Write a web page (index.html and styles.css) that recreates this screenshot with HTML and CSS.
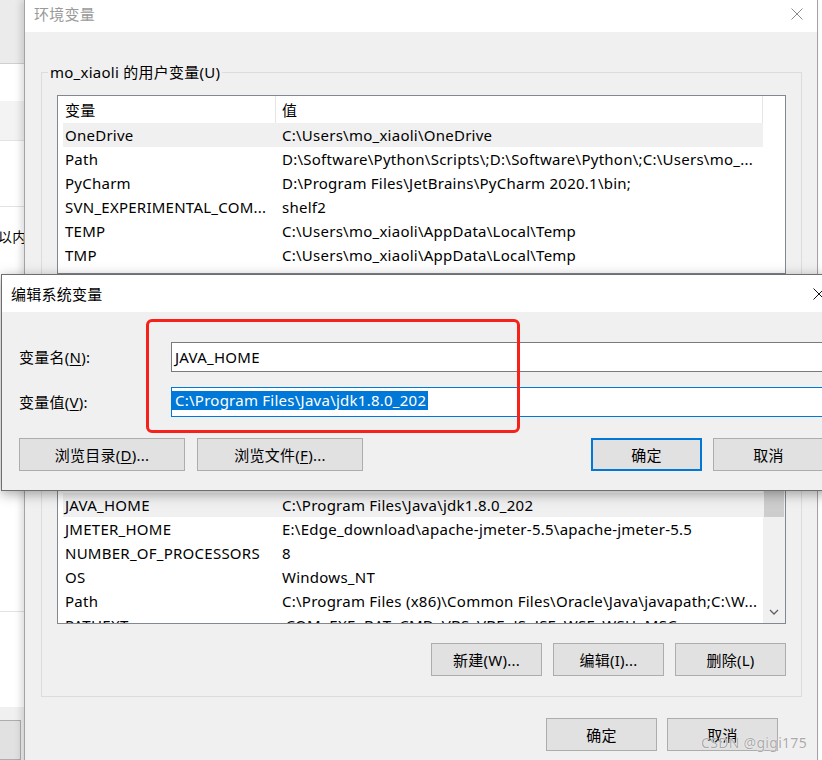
FILE: index.html
```html
<!DOCTYPE html>
<html lang="zh-CN">
<head>
<meta charset="utf-8">
<title>环境变量</title>
<link rel="stylesheet" href="styles.css">
</head>
<body>
<div class="bgwin">
  <div class="s1"></div>
  <div class="s2"></div>
  <div class="s3"></div>
  <div class="s4"></div>
  <div class="s5"><span class="cut">以内容</span></div>
  <div class="s6"></div>
  <div class="s7"><div class="bgbtn"></div></div>
</div>

<div class="main">
  <div class="titlebar">
    <span class="title">环境变量</span>
    <svg class="close" width="12" height="12" viewBox="0 0 12 12"><path d="M0.5 0.5L11.5 11.5M11.5 0.5L0.5 11.5" stroke="#8a8a8a" stroke-width="1" fill="none"/></svg>
  </div>
  <div class="winbody">
    <fieldset class="group">
      <legend>mo_xiaoli 的用户变量(U)</legend>
      <div class="list list-user">
        <div class="list-main">
          <div class="lhead"><div class="h1">变量</div><div class="h2">值</div></div>
          <div class="row sel"><div class="c1">OneDrive</div><div class="c2">C:\Users\mo_xiaoli\OneDrive</div></div>
          <div class="row"><div class="c1">Path</div><div class="c2">D:\Software\Python\Scripts\;D:\Software\Python\;C:\Users\mo_...</div></div>
          <div class="row"><div class="c1">PyCharm</div><div class="c2">D:\Program Files\JetBrains\PyCharm 2020.1\bin;</div></div>
          <div class="row"><div class="c1">SVN_EXPERIMENTAL_COM...</div><div class="c2">shelf2</div></div>
          <div class="row"><div class="c1">TEMP</div><div class="c2">C:\Users\mo_xiaoli\AppData\Local\Temp</div></div>
          <div class="row"><div class="c1">TMP</div><div class="c2">C:\Users\mo_xiaoli\AppData\Local\Temp</div></div>
        </div>
        <div class="list-side"></div>
      </div>
      <div class="btnrow">
        <button class="btn"><span>新建(N)...</span></button>
        <button class="btn"><span>编辑(E)...</span></button>
        <button class="btn"><span>删除(D)</span></button>
      </div>
    </fieldset>

    <fieldset class="group">
      <legend>系统变量(S)</legend>
      <div class="list list-sys">
        <div class="list-main">
          <div class="lhead"><div class="h1">变量</div><div class="h2">值</div></div>
          <div class="row"><div class="c1">ComSpec</div><div class="c2">C:\Windows\system32\cmd.exe</div></div>
          <div class="row"><div class="c1">DriverData</div><div class="c2">C:\Windows\System32\Drivers\DriverData</div></div>
          <div class="row"><div class="c1">FPS_BROWSER_APP_PROFILE...</div><div class="c2">Internet Explorer</div></div>
          <div class="row sel"><div class="c1">JAVA_HOME</div><div class="c2">C:\Program Files\Java\jdk1.8.0_202</div></div>
          <div class="row"><div class="c1">JMETER_HOME</div><div class="c2">E:\Edge_download\apache-jmeter-5.5\apache-jmeter-5.5</div></div>
          <div class="row"><div class="c1">NUMBER_OF_PROCESSORS</div><div class="c2">8</div></div>
          <div class="row"><div class="c1">OS</div><div class="c2">Windows_NT</div></div>
          <div class="row"><div class="c1">Path</div><div class="c2">C:\Program Files (x86)\Common Files\Oracle\Java\javapath;C:\W...</div></div>
          <div class="row"><div class="c1">PATHEXT</div><div class="c2">.COM;.EXE;.BAT;.CMD;.VBS;.VBE;.JS;.JSE;.WSF;.WSH;.MSC</div></div>
        </div>
        <div class="list-side scroll">
          <div class="thumb"></div>
          <div class="arrow">
            <svg width="10" height="6" viewBox="0 0 10 6"><polyline points="1,1 5,5 9,1" fill="none" stroke="#606060" stroke-width="1.3"/></svg>
          </div>
        </div>
      </div>
      <div class="btnrow">
        <button class="btn"><span>新建(W)...</span></button>
        <button class="btn"><span>编辑(I)...</span></button>
        <button class="btn"><span>删除(L)</span></button>
      </div>
    </fieldset>

    <div class="footer">
      <button class="btn"><span>确定</span></button>
      <button class="btn"><span>取消</span></button>
    </div>
  </div>
</div>

<div class="dialog">
  <div class="dtitle">
    <span>编辑系统变量</span>
    <svg class="dclose" width="12" height="12" viewBox="0 0 12 12"><path d="M0.5 0.5L11.5 11.5M11.5 0.5L0.5 11.5" stroke="#111" stroke-width="1" fill="none"/></svg>
  </div>
  <div class="dbody">
    <div class="field">
      <label>变量名(<u>N</u>):</label>
      <div class="inp">JAVA_HOME</div>
    </div>
    <div class="field field2">
      <label>变量值(<u>V</u>):</label>
      <div class="inp focus"><span class="selection">C:\Program Files\Java\jdk1.8.0_202</span></div>
    </div>
    <div class="dbtns">
      <button class="btn wide"><span>浏览目录(<u>D</u>)...</span></button>
      <button class="btn wide second"><span>浏览文件(<u>F</u>)...</span></button>
      <span class="spacer"></span>
      <button class="btn default"><span>确定</span></button>
      <button class="btn cancel"><span>取消</span></button>
    </div>
  </div>
  <div class="redbox"></div>
</div>

<div class="watermark">CSDN @gigi175</div>
</body>
</html>
```

FILE: styles.css
```css
* { box-sizing: border-box; }
html, body { margin: 0; padding: 0; }
body {
  width: 822px;
  height: 760px;
  overflow: hidden;
  position: relative;
  background: #fff;
  font-family: "Noto Sans", "Noto Sans CJK SC", sans-serif;
  font-size: 15px;
  line-height: 20px;
  letter-spacing: 0.25px;
  color: #000;
}

/* background window on the far left */
.bgwin {
  position: absolute;
  left: 0; top: 0;
  width: 24px; height: 760px;
  background: #fff;
  display: flex;
  flex-direction: column;
  overflow: hidden;
}
.bgwin .s1 { height: 64px; background: #ebebeb; border-bottom: 1px solid #cfcfcf; }
.bgwin .s2 { height: 37px; background: #fff; }
.bgwin .s3 { height: 40px; background: #f3f3f3; border-bottom: 1px solid #e3e3e3; }
.bgwin .s4 { height: 66px; border-bottom: 1px solid #e3e3e3; }
.bgwin .s5 { height: 406px; border-bottom: 1px solid #e3e3e3; padding-top: 21px; white-space: nowrap; overflow: hidden; }
.bgwin .s5 .cut { display: block; margin-left: -2px; font-size: 14px; line-height: 18px; }
.bgwin .s6 { height: 95px; }
.bgwin .s7 { flex: 1; background: #f0f0f0; padding-top: 13px; }
.bgwin .bgbtn { margin-left: -1px; width: 22px; height: 40px; background: #e1e1e1; border: 1px solid #adadad; }

/* main window */
.main {
  position: absolute;
  left: 24px; top: 0;
  width: 794px; height: 780px;
  border-left: 1px solid #a3a3a3;
  border-right: 1px solid #a3a3a3;
  background: #f0f0f0;
  box-shadow: -3px 0 7px rgba(0, 0, 0, 0.14);
  display: flex;
  flex-direction: column;
}
.titlebar {
  height: 32px;
  background: #fff;
  display: flex;
  align-items: center;
  padding: 0 14px 5px 9px;
  color: #9a9a9a;
}
.titlebar .close { margin-left: auto; }

.winbody { padding: 29px 15px 0 16px; }

.group {
  margin: 0;
  border: 1px solid #dcdcdc;
  padding: 0 15px 20px 6px;
  min-width: 0;
}
.group + .group { margin-top: 12px; }
.group legend { padding: 0 2px; line-height: 22px; }

.list {
  margin: 12px 0 0 9px;
  border: 1px solid #828790;
  background: #fff;
  display: flex;
  overflow: hidden;
}
.list-user { height: 179px; }
.list-sys { height: 231px; }
.list-main { width: 705px; flex: none; }
.list-side { flex: 1; }

.lhead { display: flex; height: 27px; }
.lhead .h1 {
  width: 218px;
  padding-left: 7px;
  border-right: 1px solid #e5e5e5;
  display: flex; align-items: center;
}
.lhead .h2 {
  flex: 1;
  padding-left: 6px;
  border-right: 1px solid #e5e5e5;
  display: flex; align-items: center;
}

.row { display: flex; height: 24px; align-items: center; margin-left: 5px; }
.row .c1 { width: 217px; padding-left: 2px; white-space: nowrap; overflow: hidden; flex: none; }
.row .c2 { flex: 1; padding-left: 2px; white-space: nowrap; overflow: hidden; }
.row.sel { background: #f0f0f0; }

.scroll { background: #f0f0f0; display: flex; flex-direction: column; }
.scroll .thumb { margin: 40px 1px 0 1px; height: 83px; background: #cdcdcd; }
.scroll .arrow { margin-top: auto; height: 22px; display: flex; align-items: center; justify-content: center; }

.btn {
  width: 111px;
  height: 33px;
  padding: 0;
  margin: 0;
  background: #e1e1e1;
  border: 1px solid #adadad;
  font: inherit;
  letter-spacing: inherit;
  color: #000;
  display: flex;
  align-items: center;
  justify-content: center;
  white-space: nowrap;
}
.btnrow { display: flex; justify-content: flex-end; gap: 11px; margin-top: 19px; }
.footer { display: flex; justify-content: flex-end; gap: 10px; margin-top: 21px; padding-right: 24px; }

/* edit dialog */
.dialog {
  position: absolute;
  left: 1px; top: 274px;
  width: 841px; height: 217px;
  border: 1px solid #6e6e6e;
  background: #f0f0f0;
  box-shadow: 0 3px 12px rgba(0, 0, 0, 0.35);
}
.dtitle {
  height: 37px;
  background: #fff;
  display: flex;
  align-items: center;
  padding: 0 16px 0 9px;
}
.dtitle .dclose { margin-left: auto; }
.dbody { padding: 30px 17px 0 17px; }
.field { display: grid; grid-template-columns: 152px 1fr; align-items: center; }
.field2 { margin-top: 15px; }
.field u, .dbtns u { text-decoration-thickness: 1px; text-underline-offset: 2px; }
.inp {
  height: 30px;
  background: #fff;
  border: 1px solid #7a7a7a;
  padding-left: 3px;
  display: flex;
  align-items: center;
  white-space: nowrap;
  overflow: hidden;
}
.inp.focus { border-color: #0078d7; padding-left: 0; }
.selection {
  background: #0078d7;
  color: #fff;
  padding: 0 2px 0 3px;
  line-height: 19px;
  margin-top: -4px;
}
.dbtns { display: flex; margin-top: 21px; }
.btn.wide { width: 166px; }
.btn.second { margin-left: 12px; }
.spacer { flex: 1; }
.btn.default { border: 2px solid #0078d7; }
.btn.cancel { margin-left: 11px; }

.redbox {
  position: absolute;
  left: 144px; top: 44px;
  width: 374px; height: 114px;
  border: 3px solid #f5211a;
  border-radius: 6px;
}

.watermark {
  position: absolute;
  right: 15px; top: 734px;
  font-size: 14px;
  line-height: 18px;
  color: #a9a9a9;
  text-shadow: 0 0 1px #fff, 0 0 1px #fff;
  letter-spacing: 0.3px;
}
```
